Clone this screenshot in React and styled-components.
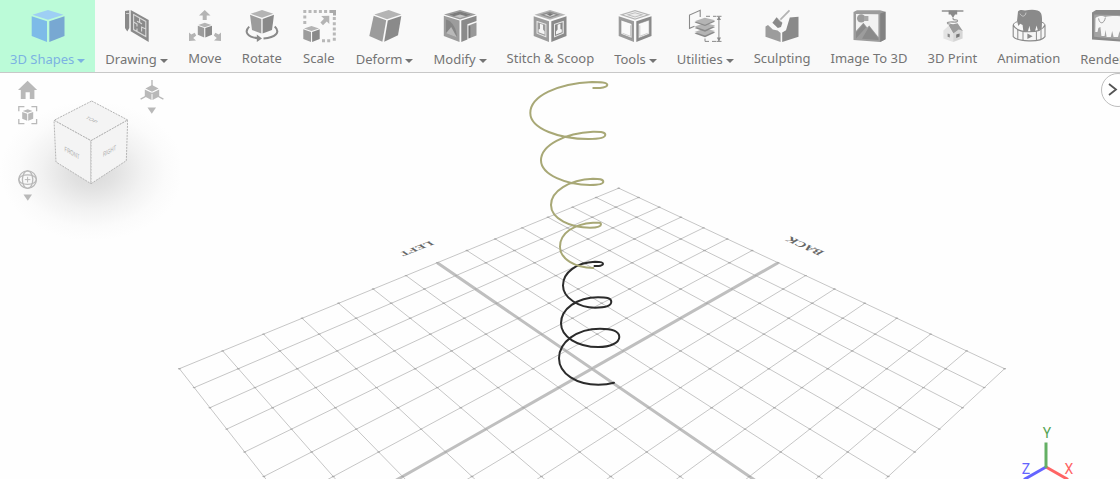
import React from "react";
import styled, { createGlobalStyle } from "styled-components";

const GlobalStyle = createGlobalStyle`
  * {
    box-sizing: border-box;
  }
  body {
    margin: 0;
    background-color: #fefefe;
    font-family: "Noto Sans", "Open Sans", sans-serif;
    overflow: hidden;
  }
`;

const StApp = styled.div`
  display: flex;
  flex-direction: column;
  height: 100vh;
`;

const StToolbar = styled.nav`
  display: flex;
  flex-shrink: 0;
  overflow: hidden;
  background-color: #f9f9f9;
  border-bottom: 1px solid #c8c8c8;
`;

const StToolBtn = styled.button`
  display: flex;
  flex-direction: column;
  align-items: center;
  flex-shrink: 0;
  height: ${({ $active }) => ($active ? "73px" : "72px")};
  margin-bottom: ${({ $active }) => ($active ? "-1px" : "0")};
  padding: 9px 10px 0;
  border: none;
  background-color: ${({ $active }) => ($active ? "#bbfbd8" : "transparent")};
  color: ${({ $active }) => ($active ? "#7cb2e2" : "#747474")};
  font-family: inherit;
  font-size: 13px;
  line-height: 18px;
  white-space: nowrap;
  cursor: pointer;
`;

const StLabel = styled.span`
  display: flex;
  align-items: center;
  gap: 3px;
  padding-top: ${({ $menu }) => ($menu ? "7px" : "6px")};
`;

const StCaret = styled.span`
  margin-top: 4px;
  border-top: 4px solid currentColor;
  border-left: 4px solid transparent;
  border-right: 4px solid transparent;
`;

const StViewport = styled.main`
  position: relative;
  flex: 1;
  min-height: 0;
`;

const StScene = styled.svg`
  display: block;
  width: 100%;
  height: 100%;
`;

const StNavPanel = styled.section`
  position: absolute;
  top: 0;
  left: 0;
  display: flex;
  gap: 14px;
  padding: 7px 18px 48px;
  background: radial-gradient(
    ellipse 92px 70px at 92px 98px,
    #d8d8d8 0%,
    #e2e2e2 25%,
    #f2f2f2 55%,
    #fbfbfb 80%,
    rgba(254, 254, 254, 0) 100%
  );
`;

const StNavColumn = styled.div`
  display: flex;
  flex-direction: column;
  align-items: center;
  width: 20px;
  gap: 5px;
`;

const StNavGroup = styled.div`
  display: flex;
  flex-direction: column;
  align-items: center;
  gap: 4px;
  margin-top: ${({ $apart }) => ($apart ? "40px" : "0")};
`;

const StIconBtn = styled.button`
  display: flex;
  justify-content: center;
  padding: 0;
  border: none;
  background: none;
  color: #b9b9b9;
  cursor: pointer;
`;

const StCubeSvg = styled.svg`
  margin-top: 18px;
`;

const StExpandBtn = styled.button`
  position: absolute;
  top: 0;
  right: -15px;
  display: flex;
  align-items: center;
  width: 34px;
  height: 34px;
  padding: 0 5px;
  border: 1px solid #bdbdbd;
  border-radius: 50%;
  background-color: #fff;
  color: #555;
  cursor: pointer;
`;

const StGizmo = styled.svg`
  position: absolute;
  right: 40px;
  bottom: 0;
`;

const T = "#b4b4b4";
const L = "#9c9c9c";
const R = "#8a8a8a";

function Cube({ top = T, left = L, right = R }) {
  return (
    <>
      <path d="M17 1 32.5 5.8 17 10.8 1.5 5.8Z" fill={top} />
      <path d="M.7 7.3 16 12.3V33L.7 27Z" fill={left} />
      <path d="M18.3 12.3 33.5 7.3V27L18.3 33Z" fill={right} />
    </>
  );
}

const icons = {
  shapes: <Cube top="#9ecff4" left="#7dbbe8" right="#78a8d2" />,
  drawing: (
    <>
      <path d="M5 2 9.3 1.3V19L7.3 22.6 5 19Z" fill={R} />
      <path d="M6 4.5H9" stroke="#ddd" strokeWidth=".8" />
      <path d="M10.7 1 28.7 11V33L10.7 22.3Z" fill={R} />
      <path
        d="M13.6 5.6 25.8 12.4V27.6L13.6 20.6ZM13.6 13 17 15V17.4M19.6 9.2V13.5L22 15M17 12.2 19.6 13.5M25.8 20 21.6 18V22.4M17 19.6V22"
        fill="none"
        stroke="#d8d8d8"
        strokeWidth="1.1"
      />
    </>
  ),
  move: (
    <>
      <path d="M16.7 1 22.5 6.6H18.7V11H14.7V6.6H11Z" fill={T} />
      <path d="M1 32V23.5L3.3 25.6 6.7 23.8 8.2 26.5 5.2 29 8 31.6Z" fill={T} />
      <path d="M33 32V23.5L30.7 25.6 27.3 23.8 25.8 26.5 28.8 29 26 31.6Z" fill={T} />
      <path d="M16.8 13.7 23.4 16 16.8 18.3 10.3 16Z" fill={T} />
      <path d="M9.8 16.8 16.2 19.1V28.5L9.8 25.8Z" fill={L} />
      <path d="M17.3 19.1 24 16.8V25.8L17.3 28.5Z" fill={R} />
    </>
  ),
  rotate: (
    <>
      <path d="M17 1 28.3 4.8 17 8.8 5.7 4.8Z" fill={T} />
      <path d="M5 5.8 16.3 10V24.5L7 21Z" fill={L} />
      <path d="M17.6 10 29 5.8 27 21 17.6 24.5Z" fill={R} />
      <path
        d="M4.2 17.6C-1.5 23.2 3 28.4 13 29.2M18.5 29.4C31 28.6 35.6 23 29.7 17.6"
        fill="none"
        stroke={R}
        strokeWidth="2"
      />
      <path d="M11.8 25.6 17 29.4 11.8 33Z" fill={R} />
    </>
  ),
  scale: (
    <>
      <path
        d="M1.3 2.5H28M32.3 8V33M20 31.7H30"
        stroke="#b8b8b8"
        strokeWidth="3"
        strokeDasharray="3 2.2"
      />
      <path d="M2.8 6.5V16" stroke="#b8b8b8" strokeWidth="3" strokeDasharray="3 2.4" />
      <path d="M28 1H34V6.5H31V4H28Z" fill="#aaa" />
      <path d="M27.3 6.8V15L24.8 12.6 21 16.2 18.4 13.6 22 9.8 19.2 7Z" fill={T} />
      <path d="M9.5 17 17 19.4 9.5 22 2 19.4Z" fill={T} />
      <path d="M1.3 20.3 9 23V33L1.3 30Z" fill={L} />
      <path d="M10.1 23 17.7 20.3V30L10.1 33Z" fill={R} />
    </>
  ),
  deform: (
    <>
      <path d="M20.7 1 33.3 5.6 19 10.3 6.3 5.6Z" fill={T} />
      <path d="M5.7 6.8 18.2 11.3 14.4 32.8 1.3 27Z" fill={L} />
      <path d="M19.8 11.6 33.3 7 30 26.3 16.2 32.8Z" fill={R} />
    </>
  ),
  modify: (
    <>
      <path d="M17 1 33 5.6 17 10.6 1 5.6Z" fill={L} />
      <path d="M17 2.4 28 5.6 17 9 6 5.6Z" fill="#c6c6c6" />
      <path d="M17 2.4 28 5.6 23 7.2 17 5.4 11 7.2 6 5.6Z" fill="#7c7c7c" />
      <path d="M.8 6.8 16.5 11.6V33L.8 27Z" fill={L} />
      <path d="M3 10.5C9 11.5 13.8 20 14 28.5L3 24.2Z" fill="#858585" />
      <path d="M3 24.2 8.2 18 14 28.5Z" fill="#b8b8b8" />
      <path d="M18.3 11.6 33.5 6.8V12L24.4 15.2V30.6L18.3 33Z" fill={R} />
      <path d="M25.6 16.4 33.5 13.4V26.4L25.6 29.4Z" fill="#999" />
      <path d="M25.6 16.4 27.4 17.4V28.6L25.6 29.4Z" fill="#757575" />
    </>
  ),
  stitch: (
    <>
      <Cube />
      <path d="M17 2.6 27 5.8 17 9 7 5.8Z" fill="#8d8d8d" />
      <path d="M17 4 23 5.8 17 7.8 11 5.8Z" fill="#d4d4d4" />
      <path d="M17 4 20.5 5 17 7 13.5 5Z" fill="#777" />
      <path d="M3.5 11.8 13.4 15V28.4L3.5 24.6Z" fill="#e8e8e8" />
      <path d="M4.6 13.2 12.4 15.8V27L4.6 24Z" fill={L} />
      <path d="M7 14.8 10 15.8V20.5L11.6 22.6V25.4L5.6 23.2V20.4L7 20Z" fill="#f4f4f4" />
      <path d="M30.8 11.8 21 15V28.4L30.8 24.6Z" fill="#e8e8e8" />
      <path d="M29.6 13.2 22 15.8V27L29.6 24Z" fill={R} />
      <path d="M27.4 14.8 24.6 15.8V20.5L23 22.6V25.4L28.8 23.2V20.4L27.4 20Z" fill="#f4f4f4" />
    </>
  ),
  tools: (
    <>
      <Cube />
      <path d="M17 2.2 28.5 5.8 17 9.6 5.5 5.8Z" fill="#f4f4f4" />
      <path d="M17 3.2 26 5.8 17 8.6 8 5.8Z" fill="#bdbdbd" />
      <path d="M17 4.2 22.5 5.8 17 7.4 11.5 5.8Z" fill="#ececec" />
      <path d="M3 11 13.9 14.7V29.3L3 25.1Z" fill="#fafafa" stroke="#888" strokeWidth=".6" />
      <path d="M31.2 11 20.4 14.7V29.3L31.2 25.1Z" fill="#fafafa" stroke="#888" strokeWidth=".6" />
      <path d="M4.5 24.3 12.5 27.3V16.3" fill="none" stroke="#ccc" strokeWidth="1" />
      <path d="M29.7 24.3 21.8 27.3V16.3" fill="none" stroke="#ccc" strokeWidth="1" />
    </>
  ),
  utilities: (
    <>
      <path d="M12.2 8V1.3L1.5 6V19.3L6.5 17.2" fill="none" stroke={R} strokeWidth="1.1" />
      <path d="M6.5 24.6 16.8 20.6 27.2 23.6 17 28.3Z" fill={R} />
      <path d="M6.5 23 16.8 19.4 27.2 22 17 26.5Z" fill={T} />
      <path d="M6.5 19 16.8 15 27.2 18 17 22.7Z" fill={R} />
      <path d="M6.5 17.6 16.8 14 27.2 16.6 17 21Z" fill={T} />
      <path d="M6.5 13.4 16.8 9.4 27.2 12.4 17 17.1Z" fill={R} />
      <path d="M6.5 12.3 16.8 8.7 27.2 11.3 17 15.8Z" fill={T} />
      <path
        d="M18 7.3H22M25 7.3H28M28.5 7.3H33.5M17 29.5V32.4H21M24 32.4H28M28.5 32.4H33.5M30.9 8V32"
        fill="none"
        stroke={R}
        strokeWidth="1"
      />
      <path d="M30.9 7.3 33 11H28.8ZM30.9 32.4 33 28.6H28.8Z" fill={R} />
    </>
  ),
  sculpting: (
    <>
      <path d="M.5 17.5 3 16 7.8 20.6 12.6 21.6 15.6 24V33L.5 27.7Z" fill={L} />
      <path d="M17.2 23.6 21 21.2 24.8 8.6 33.5 7.7V27.7L17.2 33Z" fill={R} />
      <path d="M24.5 1.3 15.4 10.6" stroke={T} strokeWidth="1.8" />
      <path d="M11.6 8.2 17.4 13.8 16 18 12.8 19 7.4 13.8Z" fill={R} />
      <path d="M12.6 9.6 16 13.2" stroke="#bbb" strokeWidth="1" />
    </>
  ),
  image: (
    <>
      <path d="M1.5 3 5 1.2H28L33.5 2.8V30.2L28.2 33 1.5 31Z" fill={L} />
      <path d="M28.2 4.4 33.5 2.8V30.2L28.2 33Z" fill="#828282" />
      <path d="M4 5 26.4 5.2V28L17.2 16.4 15.2 18.4 11.4 13.8 4 22Z" fill="#f2f2f2" />
      <path d="M4 23.6 11.4 15 14 18.4 4 29.4ZM17.2 17.6 26.4 29.6V31L10 29.8Z" fill={R} />
      <circle cx="9.2" cy="9.4" r="4.2" fill={L} />
      <path d="M12 7H16.4V12H12Z" fill="#a8a8a8" />
    </>
  ),
  print: (
    <>
      <path d="M6.8 2H28.4" stroke={R} strokeWidth="1.4" />
      <path d="M13.6 1.5H22.2V5.6H20L18 9 15.8 5.6H13.6Z" fill={R} />
      <path
        d="M18 9C18 12.5 22.5 9.5 22.5 12S13 11.5 12.4 14C12.2 15.4 17 15 18 16.5"
        fill="none"
        stroke={L}
        strokeWidth="1.3"
      />
      <path d="M13.6 16.8 8.4 21.6V29.4L18.2 33V24.8Z" fill="#e4e4e4" />
      <path d="M18.2 24.8 23.8 20.4 27.6 22.6V29.4L18.2 33Z" fill="#d6d6d6" />
      <path d="M13.6 16.2 22.6 14.2 28 22.2 23.8 20.4 18.4 24.4Z" fill={L} />
      <path d="M12.6 24.4 14.8 25.2V28.6L12.6 27.8Z" fill="#8a8a8a" />
      <path d="M21.2 25.6 24.6 24.4V27.6L21.2 29Z" fill="#777" />
    </>
  ),
  animation: (
    <>
      <path
        d="M6 2.4C8 .4 11 1 13 1.6 20 .2 27 .6 29 4.2 30.6 8 30 14 29.6 22H26L24.6 16.4 22.8 23H18.6L17.4 16.8 15.8 23H11.4L10.6 16 8.2 14.8 6.4 17 5 12Z"
        fill={R}
      />
      <path d="M8 4.6C10 8.6 13.4 7.6 14 3.6" fill="none" stroke="#c8c8c8" strokeWidth="1" />
      <path
        d="M1.2 16V27.6C5 32.6 28.6 34 33 27.6V16C31 20.6 24 22.8 17 22.8S3.4 20.6 1.2 16Z"
        fill="#f6f6f6"
        stroke={R}
        strokeWidth="1.1"
      />
      <path d="M1.2 16C1.6 14.4 3 13.4 5 12.8M33 16C32.6 14.6 31.6 13.8 30 13.2" fill="none" stroke={R} />
      <path d="M5.8 20.6V30.4M11 22.4V32M24.4 22.2V31.8M29 20.2V30" stroke={R} strokeWidth="1" />
      <path d="M15.4 24.6 20.6 27.2 15.4 30Z" fill={R} />
    </>
  ),
  render: (
    <>
      <path d="M1 3.4 5 1H34V33L1 30.5Z" fill={R} />
      <path d="M3.2 5.6 34 6.4V31L3.2 27.8Z" fill="#a4a4a4" />
      <path
        d="M4.5 9C8 6.4 12 6.8 14 8 20 6.6 28 6.6 34 8V27H29.5L28.6 22 27 28H22.6L21.2 22 19.8 28H15.6L14.5 21 13.6 27H10.4L9.4 18 7.4 19 6.5 23H4.3Z"
        fill="#f6f6f6"
      />
      <path d="M7.6 9.4C8.4 15.4 13 15.4 14.4 8.6" fill="none" stroke={L} strokeWidth="1" />
    </>
  ),
};

const tools = [
  { name: "3D Shapes", icon: "shapes", menu: true, active: true },
  { name: "Drawing", icon: "drawing", menu: true },
  { name: "Move", icon: "move" },
  { name: "Rotate", icon: "rotate" },
  { name: "Scale", icon: "scale" },
  { name: "Deform", icon: "deform", menu: true },
  { name: "Modify", icon: "modify", menu: true },
  { name: "Stitch & Scoop", icon: "stitch" },
  { name: "Tools", icon: "tools", menu: true },
  { name: "Utilities", icon: "utilities", menu: true },
  { name: "Sculpting", icon: "sculpting" },
  { name: "Image To 3D", icon: "image" },
  { name: "3D Print", icon: "print" },
  { name: "Animation", icon: "animation" },
  { name: "Render", icon: "render", menu: true },
];

function Toolbar() {
  return (
    <StToolbar>
      {tools.map((tool) => (
        <StToolBtn key={tool.name} $active={tool.active}>
          <svg width="34" height="34" viewBox="0 0 34 34" aria-hidden="true">
            {icons[tool.icon]}
          </svg>
          <StLabel $menu={tool.menu}>
            {tool.name}
            {tool.menu && <StCaret />}
          </StLabel>
        </StToolBtn>
      ))}
    </StToolbar>
  );
}

// floor plane: cell (i, j) -> perspective point
const HALF = 7;
const project = (i, j) => {
  const w = 1 + 0.03006 * (i + j);
  return [
    (592 + 49.98 * i - 8.965 * j) / w,
    (368.7 - 7.236 * (i + j)) / w,
  ];
};

const segment = (from, to) => `M${from.join(" ")}L${to.join(" ")}`;

const steps = Array.from({ length: HALF * 2 + 1 }, (_, n) => n - HALF);

function Floor() {
  return (
    <g>
      {steps.map((n) => (
        <path
          key={n}
          d={
            segment(project(n, -HALF), project(n, HALF)) +
            segment(project(-HALF, n), project(HALF, n))
          }
          stroke={n === 0 ? "#bfbfbf" : "#c6c6c6"}
          strokeWidth={n === 0 ? 3 : 1}
        />
      ))}
      {steps.map((i) =>
        steps.map((j) => {
          const [x, y] = project(i, j);
          return <ellipse key={`${i}/${j}`} cx={x} cy={y} rx="1.5" ry="0.7" fill="#aaa" />;
        })
      )}
      <g fill="#666" fontFamily="Liberation Serif, serif" fontSize="10" fontWeight="700">
        <text transform="matrix(-1.2 .46 -.7 -.48 430 241)">LEFT</text>
        <text transform="matrix(-1.2 -.54 .95 -.55 825 252)">BACK</text>
      </g>
    </g>
  );
}

function Springs() {
  return (
    <g fill="none" strokeWidth="2" strokeLinecap="round">
      <path
        stroke="#2b2b2b"
        d="M594.5 266C599 266.4 603 265.5 603 263.8S600 261.8 595 261.8C577 262.5 563 272 563 285.5C563 298 579 307.7 595 307.7C604 307.7 611.3 306 611.3 301.8S606 297.2 598 297.2C577 297.2 561 309 561 323.3C561 337 578 347 598.3 347C610 347 619.3 343 619.3 337S612 328.7 600 328.7C577 328.7 559 342 559 358.3C559 374 577 384.8 598.3 384.8C604 384.8 609 384.2 614 382.7"
      />
      <path
        stroke="#a8a876"
        d="M593.3 88C601 88.3 607.3 87.5 607.3 84.8S600 82 592 82C558 83.5 530.3 96 530.3 113C530.3 129 560 139 588.3 139C598 139 605.3 138 605.3 134.8S600 131.8 593 131.8C565 133 541 145 541 160.3C541 175 567 185 590 185C598 185 603.3 184.5 603.3 181.8S599 178.8 593 178.8C569 180 551 191 551 205C551 219 571 227.7 590 227.7C597 227.7 601 226.5 601 224.3S598 222.7 593 222.7C574 224 560 233 560 246.7C560 259 575 267.5 593.3 268"
      />
    </g>
  );
}

function NavTriangle() {
  return (
    <svg width="10" height="7" viewBox="0 0 10 7" fill="currentColor" aria-hidden="true">
      <path d="M.5 .5H9L4.8 6.8Z" />
    </svg>
  );
}

function NavPanel() {
  return (
    <StNavPanel>
      <StNavColumn>
        <StIconBtn aria-label="Home view">
          <svg width="20" height="20" viewBox="0 0 20 20" fill="currentColor">
            <path d="M9.6 .8 19.2 10H16.4V19H11.8V12.2H7.6V19H2.8V10H0Z" />
          </svg>
        </StIconBtn>
        <StIconBtn aria-label="Fit to view">
          <svg width="20" height="20" viewBox="0 0 20 20">
            <path
              d="M.8 6.2V1.6H6.4M13.4 1.6H18.6V6.2M18.6 14V18.6H13.4M6.4 18.6H.8V14"
              fill="none"
              stroke="currentColor"
              strokeWidth="1.3"
            />
            <path
              d="M9.7 4.2 14.6 6 9.7 7.8 4.8 6ZM4.2 6.9 9.2 8.7V15.8L4.2 13.8ZM10.2 8.7 15.2 6.9V13.8L10.2 15.8Z"
              fill="currentColor"
            />
          </svg>
        </StIconBtn>
        <StNavGroup $apart>
          <StIconBtn aria-label="Orbit">
            <svg width="20" height="20" viewBox="0 0 20 20" fill="none" stroke="currentColor" strokeWidth="1.3">
              <circle cx="9.6" cy="9.6" r="8.8" />
              <ellipse cx="9.6" cy="9.6" rx="5.2" ry="8.8" />
              <ellipse cx="9.6" cy="9.6" rx="8.8" ry="4.8" />
              <path d="M9.6 6.8V12.4M6.8 9.6H12.4" strokeWidth="1" />
            </svg>
          </StIconBtn>
          <StIconBtn aria-label="Orbit options">
            <NavTriangle />
          </StIconBtn>
        </StNavGroup>
      </StNavColumn>

      <StCubeSvg width="76" height="90" viewBox="52 98 76 90" role="img" aria-label="View cube">
        <g fill="#f4f4f4" stroke="#b4b4b4" strokeDasharray="2 1">
          <path d="M91.7 101 127.7 120 91 140.7 54 120.3Z" />
          <path d="M54 120.3 91 140.7V183.7L56 162Z" />
          <path d="M91 140.7 127.7 120 126.3 160.7 91 183.7Z" />
        </g>
        <g fill="#aaa" fontFamily="Liberation Sans, sans-serif" fontSize="7">
          <text transform="matrix(.72 .38 -.6 .4 85 118)">TOP</text>
          <text transform="matrix(.62 .36 0 1 64.5 151)">FRONT</text>
          <text transform="matrix(.6 -.34 0 1 103 157)">RIGHT</text>
        </g>
      </StCubeSvg>

      <StNavColumn>
        <StIconBtn aria-label="Projection">
          <svg width="24" height="22" viewBox="0 0 24 22">
            <path
              d="M12 0V9M12 13 .6 19.2M12 13 23.4 19.2"
              stroke="currentColor"
              strokeWidth="1.4"
            />
            <path
              d="M12 5 18.6 8.4 12 11.8 5.4 8.4ZM4.8 9.4 11.5 12.8V20L4.8 16.4ZM12.5 12.8 19.2 9.4V16.4L12.5 20Z"
              fill="currentColor"
            />
          </svg>
        </StIconBtn>
        <StIconBtn aria-label="Projection options">
          <NavTriangle />
        </StIconBtn>
      </StNavColumn>
    </StNavPanel>
  );
}

function AxisGizmo() {
  return (
    <StGizmo width="70" height="56" viewBox="1010 423 70 56" role="img" aria-label="Axes">
      <g strokeWidth="3">
        <path d="M1046 467 1068 479.5" stroke="#ff6464" />
        <path d="M1046 467 1024 479.5" stroke="#6464ff" />
        <path d="M1046 442.5V468" stroke="#64b064" />
      </g>
      <g fontFamily="Roboto, sans-serif" fontSize="14" textAnchor="middle">
        <text x="1047" y="438" fill="#55a555">Y</text>
        <text x="1026" y="474" fill="#6464ff">Z</text>
        <text x="1069" y="474" fill="#ff6464">X</text>
      </g>
    </StGizmo>
  );
}

function App() {
  return (
    <StApp>
      <GlobalStyle />
      <Toolbar />
      <StViewport>
        <StScene viewBox="0 73 1120 406" preserveAspectRatio="xMidYMid slice">
          <Floor />
          <Springs />
        </StScene>
        <NavPanel />
        <StExpandBtn aria-label="Open side panel">
          <svg width="12" height="16" viewBox="0 0 12 16" fill="none">
            <path d="M2 2 9 7.5 2 13" stroke="currentColor" strokeWidth="1.8" />
          </svg>
        </StExpandBtn>
        <AxisGizmo />
      </StViewport>
    </StApp>
  );
}

export default App;
